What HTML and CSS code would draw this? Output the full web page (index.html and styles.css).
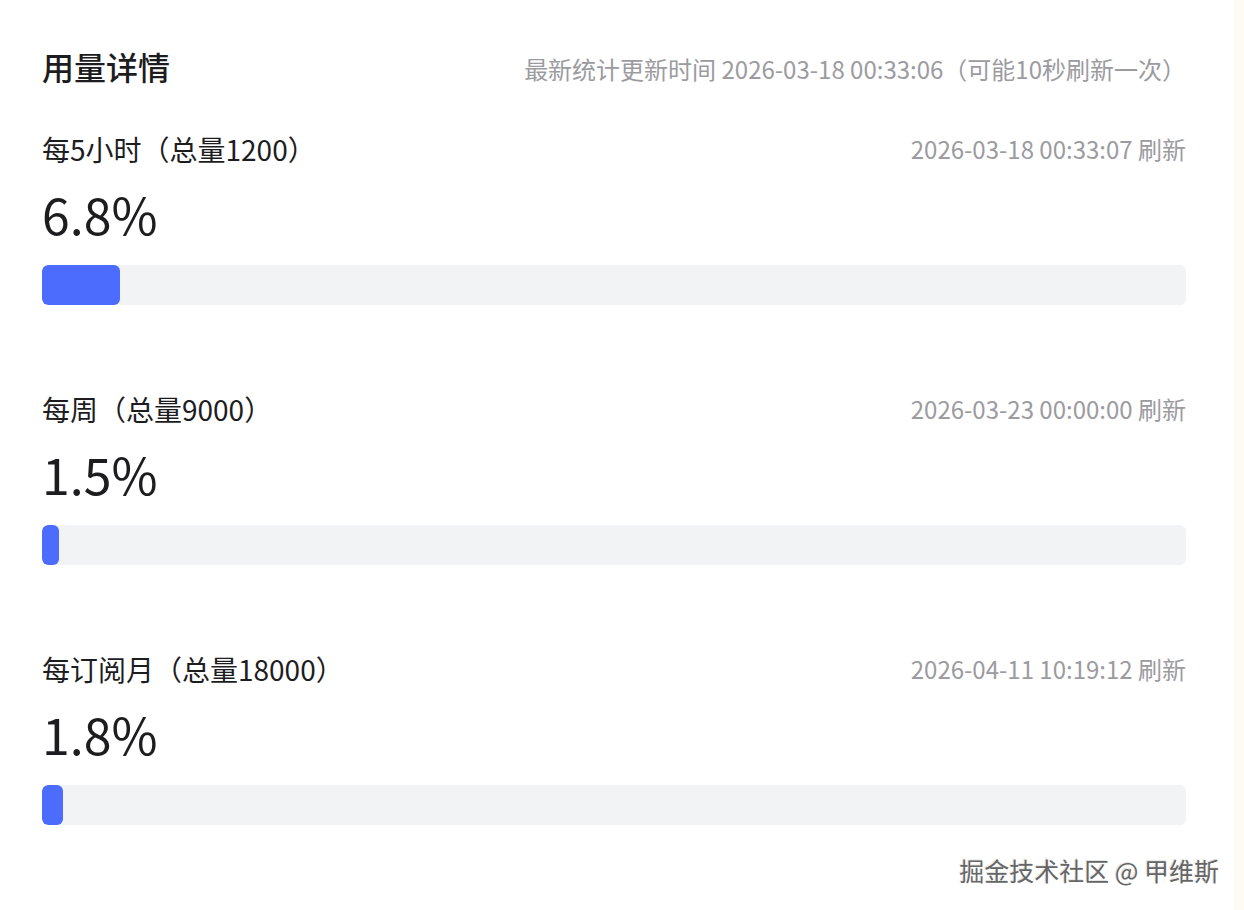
FILE: index.html
```html
<!DOCTYPE html>
<html>
<head>
  <meta charset="utf-8">
  <title>用量详情</title>
  <link rel="stylesheet" href="styles.css">
</head>
<body>
  <div class="page">
    <div class="panel">
      <div class="header">
        <h2 class="title">用量详情</h2>
        <span class="meta">最新统计更新时间 2026-03-18 00:33:06（可能10秒刷新一次）</span>
      </div>

      <div class="usage">
        <div class="usage-head">
          <span class="label">每5小时（总量1200）</span>
          <span class="reset">2026-03-18 00:33:07 刷新</span>
        </div>
        <div class="percent">6.8%</div>
        <div class="track"><div class="fill" style="width: 6.8%"></div></div>
      </div>

      <div class="usage">
        <div class="usage-head">
          <span class="label">每周（总量9000）</span>
          <span class="reset">2026-03-23 00:00:00 刷新</span>
        </div>
        <div class="percent">1.5%</div>
        <div class="track"><div class="fill" style="width: 1.5%"></div></div>
      </div>

      <div class="usage">
        <div class="usage-head">
          <span class="label">每订阅月（总量18000）</span>
          <span class="reset">2026-04-11 10:19:12 刷新</span>
        </div>
        <div class="percent">1.8%</div>
        <div class="track"><div class="fill" style="width: 1.8%"></div></div>
      </div>
    </div>
    <div class="edge"></div>
    <div class="watermark">掘金技术社区 @ 甲维斯</div>
  </div>
</body>
</html>
```

FILE: styles.css
```css
* {
  font-family: "Noto Sans CJK SC", "Noto Sans", sans-serif;
  box-sizing: border-box;
}
body {
  margin: 0;
  background: #fff;
}
/* 页面 */
.page {
  position: relative;
  display: flex;
  height: 910px;
}
.panel {
  width: 1234px;
  padding: 44px 48px 0 42px;
}
.edge {
  flex: 1;
  background: #fffaf3;
}
.header {
  display: flex;
  justify-content: space-between;
  align-items: center;
  height: 44px;
  margin-bottom: 45px;
}
.title {
  margin: 0;
  font-size: 32px;
  font-weight: 500;
  line-height: 44px;
  color: #1d1d1f;
}
.meta {
  font-size: 24px;
  line-height: 32px;
  color: #9b9ba0;
  margin-top: 6px;
}
/* 用量块 */
.usage {
  margin-bottom: 88px;
}
.usage-head {
  display: flex;
  justify-content: space-between;
  align-items: center;
  height: 32px;
}
.label {
  font-size: 28px;
  line-height: 32px;
  color: #1d1d1f;
}
.reset {
  font-size: 24px;
  line-height: 32px;
  color: #9b9ba0;
}
.percent {
  margin-top: 18px;
  font-size: 50px;
  line-height: 60px;
  color: #1d1d1f;
}
.track {
  margin-top: 22px;
  height: 40px;
  border-radius: 6px;
  background: #f2f3f5;
  overflow: hidden;
}
.fill {
  height: 100%;
  border-radius: 6px;
  background: #4b6cfd;
}
.watermark {
  position: absolute;
  right: 25px;
  top: 852px;
  font-size: 25px;
  color: #666;
  text-shadow: 1px 1px 0 #fff, -1px -1px 0 #e4e4e4;
}
```
